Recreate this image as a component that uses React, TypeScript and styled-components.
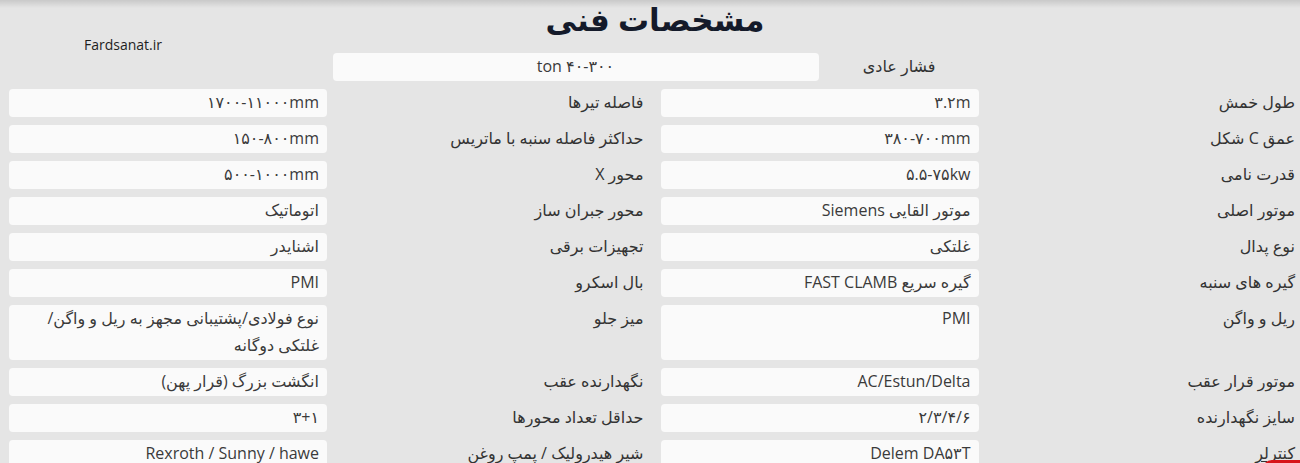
import React from 'react';
import styled, { createGlobalStyle } from 'styled-components';

const GlobalStyle = createGlobalStyle`
  html, body {
    margin: 0;
    padding: 0;
    background: #e5e5e5;
    overflow: hidden;
  }
  body {
    font-family: "Open Sans", "DejaVu Sans", sans-serif;
  }
`;

const Page = styled.div`
  position: relative;
  width: 1300px;
  height: 463px;
  background: #e5e5e5;
  direction: rtl;
  font-family: "Open Sans", "DejaVu Sans", sans-serif;
  color: #333;
  overflow: hidden;

  &::before {
    content: '';
    position: absolute;
    top: 0;
    left: 0;
    right: 0;
    height: 8px;
    background: linear-gradient(to bottom, rgba(0, 0, 0, 0.12), rgba(0, 0, 0, 0));
  }
`;

const Title = styled.h1`
  margin: 0;
  height: 53px;
  box-sizing: border-box;
  padding: 0 0 0 10px;
  text-align: center;
  font-size: 31px;
  font-weight: 700;
  line-height: 38px;
  color: #141a2a;
`;

const Watermark = styled.div`
  position: absolute;
  left: 84px;
  top: 35px;
  direction: ltr;
  font-family: "Open Sans", sans-serif;
  font-size: 14px;
  color: #1e1e1e;
`;

const TopRow = styled.div`
  display: flex;
  justify-content: center;
  align-items: center;
  gap: 20px;
  margin-bottom: 8px;
  padding-right: 32px;
`;

const TopLabel = styled.div`
  width: 97px;
  text-align: right;
  font-size: 16px;
  line-height: 27px;
  padding-bottom: 1px;
`;

const TopValue = styled.div`
  width: 486px;
  height: 28px;
  box-sizing: border-box;
  padding-bottom: 2px;
  border-radius: 4px;
  background: #fafafa;
  text-align: center;
  font-size: 16px;
  line-height: 26px;
  color: #3a3a3a;
`;

const SpecGrid = styled.div`
  display: grid;
  grid-template-columns: 1fr 318px 1fr 318px;
  column-gap: 17px;
  row-gap: 8px;
  padding: 0 5px 0 9px;
`;

const Label = styled.div<{ $link?: boolean }>`
  align-self: start;
  font-size: 16px;
  line-height: 27px;
  text-align: right;
  color: #333;
  text-decoration: ${(p) => (p.$link ? 'underline' : 'none')};
  text-underline-offset: 2px;
`;

const Value = styled.div`
  min-height: 28px;
  box-sizing: border-box;
  padding: 0 8px 1px;
  border-radius: 4px;
  background: #fafafa;
  font-size: 16px;
  line-height: 27px;
  text-align: right;
  color: #3a3a3a;
`;

const Fab = styled.div`
  position: absolute;
  right: 0;
  top: 460px;
  width: 38px;
  height: 40px;
  border-radius: 10px 0 0 0;
  background: #d7141a;
`;

type Spec = { label: string; value: React.ReactNode; link?: boolean };

// each row: right pair first, then left pair
const rows: [Spec, Spec][] = [
  [
    { label: 'طول خمش', value: '۳.۲m' },
    { label: 'فاصله تیرها', value: '۱۷۰۰-۱۱۰۰۰mm' },
  ],
  [
    { label: 'عمق C شکل', value: '۳۸۰-۷۰۰mm' },
    { label: 'حداکثر فاصله سنبه با ماتریس', value: '۱۵۰-۸۰۰mm' },
  ],
  [
    { label: 'قدرت نامی', value: '۵.۵-۷۵kw' },
    { label: 'محور X', value: '۵۰۰-۱۰۰۰mm' },
  ],
  [
    { label: 'موتور اصلی', value: 'موتور القایی Siemens' },
    { label: 'محور جبران ساز', value: 'اتوماتیک' },
  ],
  [
    { label: 'نوع پدال', value: 'غلتکی' },
    { label: 'تجهیزات برقی', value: 'اشنایدر' },
  ],
  [
    { label: 'گیره های سنبه', value: 'گیره سریع FAST CLAMB' },
    { label: 'بال اسکرو', value: 'PMI' },
  ],
  [
    { label: 'ریل و واگن', value: 'PMI' },
    {
      label: 'میز جلو',
      value: (
        <>
          نوع فولادی/پشتیبانی مجهز به ریل و واگن/
          <br />
          غلتکی دوگانه
        </>
      ),
    },
  ],
  [
    { label: 'موتور قرار عقب', value: 'AC/Estun/Delta' },
    { label: 'نگهدارنده عقب', value: 'انگشت بزرگ (قرار پهن)' },
  ],
  [
    { label: 'سایز نگهدارنده', value: '۲/۳/۴/۶' },
    { label: 'حداقل تعداد محورها', value: '۳+۱' },
  ],
  [
    { label: 'کنترلر', value: 'Delem DA۵۳T', link: true },
    { label: 'شیر هیدرولیک / پمپ روغن', value: 'Rexroth / Sunny / hawe' },
  ],
];

export default function App() {
  return (
    <Page>
      <GlobalStyle />
      <Title>مشخصات فنی</Title>
      <Watermark>Fardsanat.ir</Watermark>
      <TopRow>
        <TopLabel>فشار عادی</TopLabel>
        <TopValue>۴۰-۳۰۰ ton</TopValue>
      </TopRow>
      <SpecGrid>
        {rows.map((pair, i) => (
          <React.Fragment key={i}>
            {pair.map((s) => (
              <React.Fragment key={s.label}>
                <Label $link={s.link}>{s.label}</Label>
                <Value>{s.value}</Value>
              </React.Fragment>
            ))}
          </React.Fragment>
        ))}
      </SpecGrid>
      <Fab />
    </Page>
  );
}
